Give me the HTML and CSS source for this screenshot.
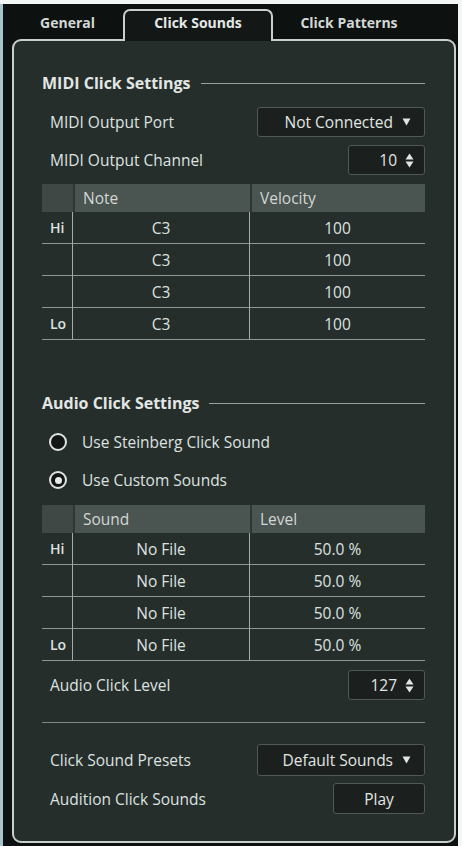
FILE: index.html
```html
<!DOCTYPE html>
<html lang="en">
<head>
  <meta charset="UTF-8" />
  <title>Metronome Setup | Click Sounds</title>
  <link rel="stylesheet" href="styles.css">
</head>
<body>
<div class="window">
  <nav class="tabs">
    <div class="tab tab-first">General</div>
    <div class="tab active">Click Sounds</div>
    <div class="tab tab-last">Click Patterns</div>
  </nav>

  <section class="panel">
    <h3 class="group-title">MIDI Click Settings</h3>

    <div class="row first-row">
      <span class="label">MIDI Output Port</span>
      <div class="dropdown">Not Connected
        <svg class="caret" width="9" height="8" viewBox="0 0 9 8"><path d="M0.5 0.5h8l-4 7z" fill="#e1e5e3"/></svg>
      </div>
    </div>
    <div class="row">
      <span class="label">MIDI Output Channel</span>
      <div class="spinbox">10
        <svg class="spin" width="9" height="15" viewBox="0 0 9 15"><path d="M4.5 0.5l4 6h-8z M0.5 8.5h8l-4 6z" fill="#e1e5e3"/></svg>
      </div>
    </div>

    <div class="grid-table midi-table">
      <div class="th th-key"></div>
      <div class="th">Note</div>
      <div class="th">Velocity</div>

      <div class="td key">Hi</div><div class="td mid">C3</div><div class="td">100</div>
      <div class="td key"></div><div class="td mid">C3</div><div class="td">100</div>
      <div class="td key"></div><div class="td mid">C3</div><div class="td">100</div>
      <div class="td key">Lo</div><div class="td mid">C3</div><div class="td">100</div>
    </div>

    <h3 class="group-title audio-title">Audio Click Settings</h3>

    <label class="row radio-row first-radio">
      <span class="radio"></span>
      Use Steinberg Click Sound
    </label>
    <label class="row radio-row">
      <span class="radio checked"></span>
      Use Custom Sounds
    </label>

    <div class="grid-table audio-table">
      <div class="th th-key"></div>
      <div class="th">Sound</div>
      <div class="th">Level</div>

      <div class="td key">Hi</div><div class="td mid">No File</div><div class="td">50.0 %</div>
      <div class="td key"></div><div class="td mid">No File</div><div class="td">50.0 %</div>
      <div class="td key"></div><div class="td mid">No File</div><div class="td">50.0 %</div>
      <div class="td key">Lo</div><div class="td mid">No File</div><div class="td">50.0 %</div>
    </div>

    <div class="row level-row">
      <span class="label">Audio Click Level</span>
      <div class="spinbox">127
        <svg class="spin" width="9" height="15" viewBox="0 0 9 15"><path d="M4.5 0.5l4 6h-8z M0.5 8.5h8l-4 6z" fill="#e1e5e3"/></svg>
      </div>
    </div>

    <hr class="divider">

    <div class="row presets-row">
      <span class="label">Click Sound Presets</span>
      <div class="dropdown">Default Sounds
        <svg class="caret" width="9" height="8" viewBox="0 0 9 8"><path d="M0.5 0.5h8l-4 7z" fill="#e1e5e3"/></svg>
      </div>
    </div>
    <div class="row audition-row">
      <span class="label">Audition Click Sounds</span>
      <button class="play-btn">Play</button>
    </div>
  </section>
</div>
</body>
</html>
```

FILE: styles.css
```css
* { box-sizing: border-box; margin: 0; padding: 0; }
body {
  background: #f4f6f6;
  font-family: 'Open Sans', 'Noto Sans', sans-serif;
  color: #dde2e0;
  font-size: 15.5px;
}
.window {
  margin: 4px 4px 0 0;
  height: 842px;
  background: #0d1110;
  border-left: 3px solid #a9c3cb;
  padding: 0 2px 3px 9px;
  display: flex;
  flex-direction: column;
}

/* tab strip */
.tabs {
  display: flex;
  height: 35px;
  flex: none;
}
.tab {
  font-weight: 700;
  font-size: 14px;
  color: #d3d8d6;
  text-align: center;
  padding-top: 9px;
}
.tab-first { width: 111px; }
.tab-last { width: 152px; }
.tab.active {
  width: 150px;
  margin-top: 5px;
  height: 32px;
  padding-top: 2px;
  border: 2px solid #c8cfcc;
  border-bottom: 0;
  border-radius: 7px 7px 0 0;
  background: #131817;
  position: relative;
  z-index: 1;
  color: #e4e8e6;
}

.panel {
  flex: 1;
  background: #262e2b;
  border: 2px solid #c8cfcc;
  border-radius: 9px;
  padding: 32px 29px 0 28px;
}

.group-title {
  display: flex;
  align-items: center;
  gap: 10px;
  font-size: 16px;
  font-weight: 700;
  line-height: 20px;
  height: 20px;
  color: #e2e6e4;
}
.group-title::after {
  content: "";
  flex: 1;
  height: 1px;
  background: #97a19d;
}
.audio-title { margin-top: 53px; }

.row {
  display: flex;
  align-items: center;
  justify-content: space-between;
  height: 30px;
  padding-left: 8px;
  margin-top: 8px;
}
.first-row { margin-top: 14px; }

.dropdown, .spinbox, .play-btn {
  height: 100%;
  background: #1b201f;
  border: 1px solid #4f5955;
  border-radius: 3px;
  color: #e1e5e3;
  font-family: inherit;
  font-size: 15.5px;
  display: flex;
  align-items: center;
  justify-content: flex-end;
}
.dropdown {
  width: 168px;
  padding-right: 13px;
}
.caret { margin-left: 9px; }
.spinbox {
  width: 77px;
  padding-right: 10px;
}
.spin { margin-left: 8px; }

/* note / sound tables */
.grid-table {
  display: grid;
  grid-template-columns: 31px 177px 1fr;
  grid-template-rows: 28px;
  grid-auto-rows: 32px;
  margin-top: 9px;
}
.grid-table .th {
  height: 28px;
  background: #4a5451;
  color: #d2d7d5;
  line-height: 28px;
  padding-left: 8px;
  border-left: 2px solid #2f3733;
}
.grid-table .th-key {
  background: #3f4845;
  border-left: 0;
}
.grid-table .td {
  border-bottom: 1px solid #8e9995;
  display: flex;
  align-items: center;
  justify-content: center;
}
.grid-table .key {
  justify-content: flex-start;
  padding-left: 8px;
  font-size: 14px;
  font-weight: 600;
  border-right: 1px solid #a3aca9;
}
.grid-table .mid { border-right: 1px solid #a3aca9; }

.radio-row {
  justify-content: flex-start;
  gap: 15px;
  padding-left: 7px;
}
.first-radio { margin-top: 14px; }
.radio {
  width: 18px;
  height: 18px;
  border-radius: 50%;
  border: 2.5px solid #dfe3e1;
  background: #121615;
  display: flex;
  align-items: center;
  justify-content: center;
}
.radio.checked::after {
  content: "";
  width: 7px;
  height: 7px;
  border-radius: 50%;
  background: #e6eae8;
}
.audio-table { margin-top: 10px; }

.level-row { margin-top: 9px; }
.divider {
  border: 0;
  height: 1px;
  background: #7d8784;
  margin-top: 22px;
}
.presets-row { margin-top: 21px; height: 32px; }
.audition-row { margin-top: 7px; height: 31px; }
.play-btn {
  width: 92px;
  justify-content: center;
}
```
